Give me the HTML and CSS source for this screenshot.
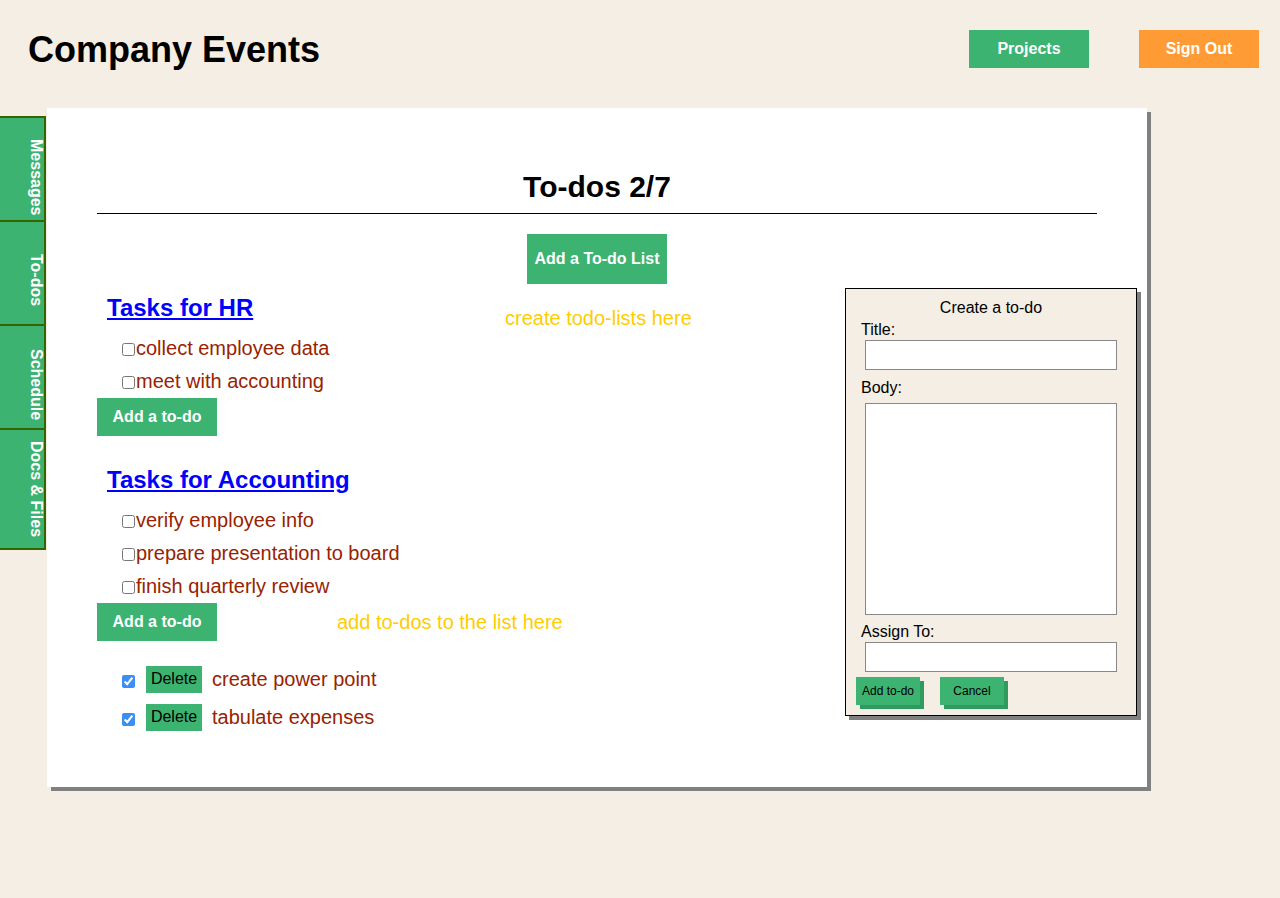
FILE: index.html
```html
<!DOCTYPE html>
<html lang="en">
<head>
<meta charset="utf-8">
<title>Company Events - To-dos</title>
<link rel="stylesheet" href="styles.css">
</head>
<body>
<header class="topbar">
  <h1 class="brand">Company Events</h1>
  <nav class="top-actions">
    <button class="btn btn-top btn-projects">Projects</button>
    <button class="btn btn-top btn-signout">Sign Out</button>
  </nav>
</header>
<div class="main">
  <nav class="tabs">
    <a class="tab tab-messages" href="#">Messages</a>
    <a class="tab tab-todos" href="#">To-dos</a>
    <a class="tab tab-schedule" href="#">Schedule</a>
    <a class="tab tab-docs" href="#">Docs &amp; Files</a>
  </nav>
  <section class="panel">
    <h2 class="panel-title">To-dos 2/7</h2>
    <div class="list-actions">
      <button class="btn btn-add-list">Add a To-do List</button>
    </div>

    <div class="todo-list">
      <h3 class="list-title"><a href="#">Tasks for HR</a></h3>
      <ul class="items">
        <li class="item"><input type="checkbox" class="check"><span>collect employee data</span></li>
        <li class="item"><input type="checkbox" class="check"><span>meet with accounting</span></li>
      </ul>
      <div class="add-row">
        <button class="btn btn-add-todo">Add a to-do</button>
      </div>
    </div>

    <div class="todo-list todo-list-second">
      <h3 class="list-title"><a href="#">Tasks for Accounting</a></h3>
      <ul class="items">
        <li class="item"><input type="checkbox" class="check"><span>verify employee info</span></li>
        <li class="item"><input type="checkbox" class="check"><span>prepare presentation to board</span></li>
        <li class="item"><input type="checkbox" class="check"><span>finish quarterly review</span></li>
      </ul>
      <div class="add-row">
        <button class="btn btn-add-todo">Add a to-do</button>
        <span class="note">add to-dos to the list here</span>
      </div>
    </div>

    <ul class="done-list">
      <li class="done-item"><input type="checkbox" class="check check-done" checked><button class="btn btn-delete">Delete</button><span>create power point</span></li>
      <li class="done-item"><input type="checkbox" class="check check-done" checked><button class="btn btn-delete">Delete</button><span>tabulate expenses</span></li>
    </ul>

    <span class="note note-lists">create todo-lists here</span>

    <form class="todo-form">
      <div class="form-title">Create a to-do</div>
      <label class="form-label" for="t-title">Title:</label>
      <input id="t-title" class="form-input" type="text">
      <label class="form-label form-label-body" for="t-body">Body:</label>
      <textarea id="t-body" class="form-textarea"></textarea>
      <label class="form-label form-label-assign" for="t-assign">Assign To:</label>
      <input id="t-assign" class="form-input" type="text">
      <div class="form-buttons">
        <button type="button" class="btn btn-form">Add to-do</button>
        <button type="button" class="btn btn-form">Cancel</button>
      </div>
    </form>
  </section>
</div>
</body>
</html>
```
FILE: styles.css
```css
* {
  box-sizing: border-box;
}

html, body {
  margin: 0;
  padding: 0;
}

body {
  background: #f5eee4;
  font-family: "Liberation Sans", Arial, Helvetica, sans-serif;
  color: #000;
  width: 1280px;
  height: 898px;
  overflow: hidden;
}

.btn {
  font-family: "Liberation Sans", Arial, Helvetica, sans-serif;
  border: none;
  margin: 0;
  padding: 0;
  cursor: pointer;
  background: #3cb371;
}

/* Header */
.topbar {
  display: flex;
  align-items: flex-start;
  justify-content: space-between;
  height: 108px;
  padding: 30px 21px 0 28px;
}

.brand {
  margin: 0;
  font-size: 36px;
  line-height: 40px;
  font-weight: bold;
}

.top-actions {
  display: flex;
  gap: 50px;
}

.btn-top {
  width: 120px;
  height: 38px;
  color: #fff;
  font-size: 16px;
  font-weight: bold;
}

.btn-signout {
  background: #ff9b35;
}

/* Main area */
.main {
  display: flex;
  align-items: flex-start;
}

.tabs {
  display: flex;
  flex-direction: column;
  margin-top: 8px;
  width: 46px;
}

.tab {
  display: block;
  writing-mode: vertical-rl;
  width: 46px;
  height: 104px;
  background: #3cb371;
  border-top: 2px solid #336600;
  border-right: 2px solid #336600;
  color: #fff;
  font-weight: bold;
  font-size: 16px;
  line-height: 16px;
  text-decoration: none;
  white-space: nowrap;
}

.tab-messages { padding-top: 21px; }
.tab-todos { padding-top: 32px; }
.tab-schedule { padding-top: 23px; }
.tab-docs {
  height: 122px;
  padding-top: 11px;
  border-bottom: 2px solid #336600;
}

.panel {
  position: relative;
  margin-left: 1px;
  width: 1100px;
  height: 679px;
  background: #fff;
  box-shadow: 4px 4px 0 #808080;
  padding: 62px 50px 0 50px;
}

.panel-title {
  margin: 0;
  font-size: 30px;
  line-height: 34px;
  font-weight: bold;
  text-align: center;
  padding-bottom: 9px;
  border-bottom: 1px solid #000;
}

.list-actions {
  display: flex;
  justify-content: center;
  margin-top: 20px;
}

.btn-add-list {
  width: 140px;
  height: 50px;
  color: #fff;
  font-size: 16px;
  font-weight: bold;
}

.todo-list {
  margin-top: 10px;
}

.todo-list-second {
  margin-top: 30px;
}

.list-title {
  margin: 0;
  padding-left: 10px;
  font-size: 24px;
  line-height: 28px;
  font-weight: bold;
}

.list-title a {
  color: #0000ff;
  text-decoration: underline;
}

.items {
  list-style: none;
  margin: 10px 0 0 0;
  padding: 0 0 0 25px;
}

.item {
  display: flex;
  align-items: center;
  height: 33px;
  font-size: 20px;
  line-height: 33px;
  color: #992200;
}

.check {
  width: 13px;
  height: 13px;
  margin: 1px 1px 0 0;
  flex: none;
  accent-color: #3b8ef5;
}

.add-row {
  display: flex;
  align-items: center;
  gap: 120px;
}

.btn-add-todo {
  width: 120px;
  height: 38px;
  color: #fff;
  font-size: 16px;
  font-weight: bold;
}

.note {
  color: #ffcc00;
  font-size: 20px;
  line-height: 23px;
}

.note-lists {
  position: absolute;
  left: 458px;
  top: 199px;
}

.done-list {
  list-style: none;
  margin: 19px 0 0 0;
  padding: 0 0 0 25px;
}

.done-item {
  display: flex;
  align-items: center;
  height: 38px;
  font-size: 20px;
  color: #992200;
}

.check-done {
  margin: 4px 11px 0 0;
}

.btn-delete {
  width: 56px;
  height: 27px;
  color: #000;
  font-size: 16px;
  margin-right: 10px;
}

/* Create form (popup) */
.todo-form {
  position: absolute;
  left: 798px;
  top: 180px;
  width: 292px;
  height: 428px;
  margin: 0;
  background: #f5eee4;
  border: 1px solid #000;
  box-shadow: 4px 4px 0 #808080;
  padding-top: 10px;
  font-size: 16px;
}

.form-title {
  text-align: center;
  line-height: 18px;
}

.form-label {
  display: block;
  padding-left: 15px;
  line-height: 18px;
  margin-top: 4px;
}

.form-label-body {
  margin-top: 9px;
}

.form-label-assign {
  margin-top: 8px;
}

.form-input {
  display: block;
  width: 252px;
  height: 30px;
  margin: 1px 0 0 19px;
  border: 1px solid #888;
  background: #fff;
  padding: 2px 4px;
  font-family: "Liberation Sans", Arial, sans-serif;
  font-size: 14px;
}

.form-textarea {
  display: block;
  width: 252px;
  height: 212px;
  margin: 6px 0 0 19px;
  border: 1px solid #888;
  background: #fff;
  resize: none;
  font-family: "Liberation Sans", Arial, sans-serif;
}

.form-buttons {
  display: flex;
  gap: 20px;
  margin-top: 5px;
  padding-left: 10px;
}

.btn-form {
  width: 64px;
  height: 28px;
  font-size: 12px;
  color: #000;
  box-shadow: 4px 4px 0 #2f9b5e;
}
```
